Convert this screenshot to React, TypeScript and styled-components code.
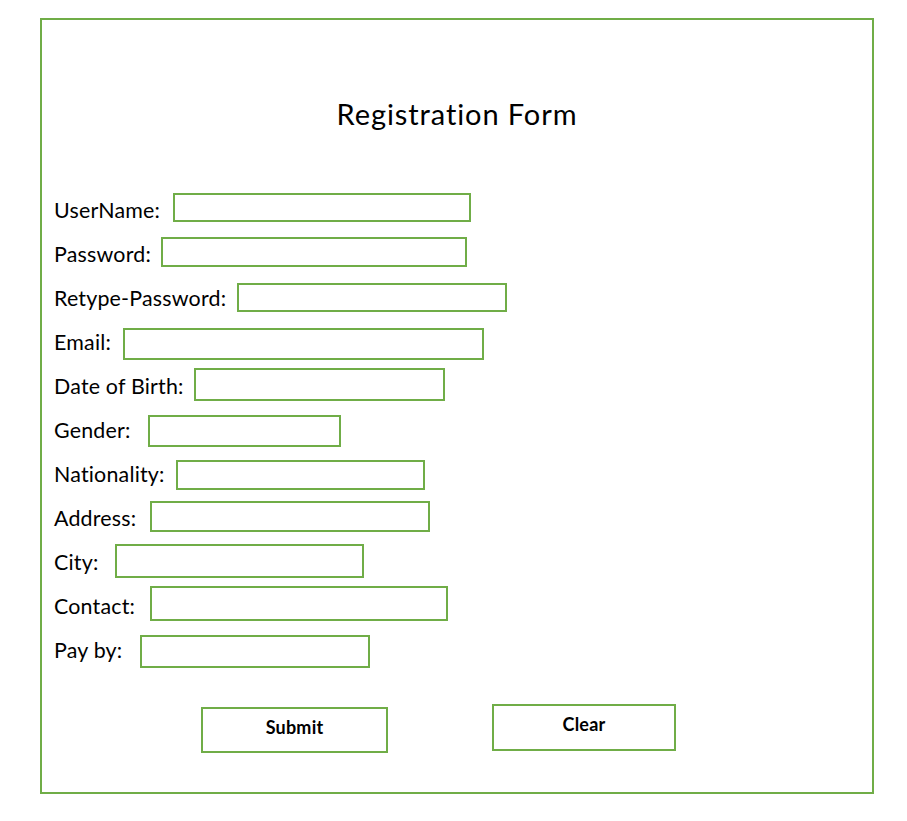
import React from "react";
import styled, { createGlobalStyle } from "styled-components";

const GREEN = "#70AD47";

const Global = createGlobalStyle`
  html, body {
    margin: 0;
    padding: 0;
    background: #ffffff;
  }
  body {
    font-family: "Lato", "Noto Sans", sans-serif;
    color: #000000;
    font-variant-ligatures: none;
    font-feature-settings: "liga" 0;
  }
`;

const Page = styled.div`
  padding: 18px 0 0 40px;
  width: 907px;
  height: 821px;
  box-sizing: border-box;
`;

const Frame = styled.div`
  width: 834px;
  height: 776px;
  box-sizing: border-box;
  border: 2px solid ${GREEN};
  display: flex;
  flex-direction: column;
`;

const Title = styled.h1`
  margin: 77px 0 0 0;
  font-family: "Lato", "Noto Sans", sans-serif;
  font-weight: 400;
  font-size: 29px;
  letter-spacing: 0.9px;
  line-height: 34px;
  text-align: center;
`;

const Form = styled.div`
  margin-top: 57px;
  padding-left: 12px;
  display: flex;
  flex-direction: column;
`;

const Row = styled.div`
  height: 44px;
  display: flex;
  align-items: flex-start;
`;

const Label = styled.label<{ $w: number }>`
  width: ${(p) => p.$w}px;
  flex: none;
  font-size: 21.4px;
  letter-spacing: 0.2px;
  line-height: 44px;
  white-space: nowrap;
`;

const Field = styled.div<{ $w: number; $h: number; $top: number }>`
  width: ${(p) => p.$w}px;
  height: ${(p) => p.$h}px;
  margin-top: ${(p) => p.$top}px;
  box-sizing: border-box;
  border: 2px solid ${GREEN};
  background: #ffffff;
  flex: none;
`;

const Buttons = styled.div`
  margin-top: 32px;
  padding-left: 159px;
  display: flex;
  align-items: flex-start;
  gap: 104px;
`;

const Button = styled.div<{ $w: number; $h: number; $top: number }>`
  width: ${(p) => p.$w}px;
  height: ${(p) => p.$h}px;
  margin-top: ${(p) => p.$top}px;
  box-sizing: border-box;
  border: 2px solid ${GREEN};
  padding-top: 8px;
  display: flex;
  justify-content: center;
  align-items: flex-start;
  font-size: 18px;
  font-weight: 700;
  letter-spacing: 0.2px;
  line-height: 20px;
`;

type FieldSpec = { label: string; x: number; w: number; h: number; top: number };

// x: left edge of field (page px); top: offset of the field within its row
const fields: FieldSpec[] = [
  { label: "UserName:", x: 173, w: 298, h: 29, top: 5 },
  { label: "Password:", x: 161, w: 306, h: 30, top: 5 },
  { label: "Retype-Password:", x: 237, w: 270, h: 29, top: 7 },
  { label: "Email:", x: 123, w: 361, h: 32, top: 8 },
  { label: "Date of Birth:", x: 194, w: 251, h: 33, top: 4 },
  { label: "Gender:", x: 148, w: 193, h: 32, top: 7 },
  { label: "Nationality:", x: 176, w: 249, h: 30, top: 8 },
  { label: "Address:", x: 150, w: 280, h: 31, top: 5 },
  { label: "City:", x: 115, w: 249, h: 34, top: 4 },
  { label: "Contact:", x: 150, w: 298, h: 35, top: 2 },
  { label: "Pay by:", x: 140, w: 230, h: 33, top: 7 },
];

const LABEL_X = 54;

export default function App() {
  return (
    <>
      <Global />
      <Page>
        <Frame>
          <Title>Registration Form</Title>
          <Form>
            {fields.map((f) => (
              <Row key={f.label}>
                <Label $w={f.x - LABEL_X}>{f.label}</Label>
                <Field $w={f.w} $h={f.h} $top={f.top} />
              </Row>
            ))}
          </Form>
          <Buttons>
            <Button $w={187} $h={46} $top={3}>Submit</Button>
            <Button $w={184} $h={47} $top={0}>Clear</Button>
          </Buttons>
        </Frame>
      </Page>
    </>
  );
}
